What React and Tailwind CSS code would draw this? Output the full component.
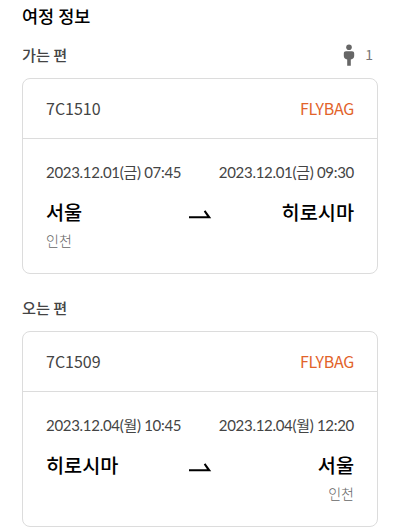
import React from "react";

const journeys = [
  {
    label: "가는 편",
    passengers: 1,
    flight: "7C1510",
    fare: "FLYBAG",
    from: { date: "2023.12.01(금) 07:45", city: "서울", airport: "인천" },
    to: { date: "2023.12.01(금) 09:30", city: "히로시마" },
  },
  {
    label: "오는 편",
    flight: "7C1509",
    fare: "FLYBAG",
    from: { date: "2023.12.04(월) 10:45", city: "히로시마" },
    to: { date: "2023.12.04(월) 12:20", city: "서울", airport: "인천" },
  },
];

function PersonIcon() {
  return (
    <svg width="12" height="22" viewBox="0 0 12 22" fill="#666666">
      <circle cx="6" cy="3.2" r="2.8" />
      <path d="M3 7.2H9C10.300 7.200 11.200 8.100 11.200 9.400V11.800C11.200 13.800 10 15.200 7.800 15.600V21.800H4.200V15.600C2 15.200 .8 13.800 .8 11.800V9.400C.8 8.100 1.700 7.200 3 7.200Z" />
    </svg>
  );
}

function ArrowIcon() {
  return (
    <svg width="23" height="9" viewBox="0 0 23 9" fill="#000">
      <path d="M0 6.200H18L14.800 1.500L16.400 .2L22.200 8.300H0Z" />
    </svg>
  );
}

function Stop({ stop, right }) {
  return (
    <div className={right ? "text-right" : "text-left"}>
      <p className="h-8 text-[19.7px] leading-8 font-medium text-black">{stop.city}</p>
      <p className="h-6 text-[14px] leading-6 font-light text-[#666]">{stop.airport}</p>
    </div>
  );
}

function JourneyCard({ journey }) {
  return (
    <div className="h-[196px] w-[356px] rounded-lg border border-[#dcdcdc]">
      <div className="flex h-[60px] items-center justify-between border-b border-[#dcdcdc] px-[23px] pb-[2px] text-[16px]">
        <span className="text-[#444]">{journey.flight}</span>
        <span className="tracking-[-0.3px] text-[#e2632a]">{journey.fare}</span>
      </div>
      <div className="px-[23px] pt-[21px]">
        <div className="flex justify-between font-['Lato','Noto_Sans_CJK_KR',sans-serif] text-[15px] leading-6 tracking-[-0.3px] whitespace-nowrap text-[#444]">
          <span>{journey.from.date}</span>
          <span>{journey.to.date}</span>
        </div>
        <div className="mt-3 grid grid-cols-[1fr_23px_1fr]">
          <Stop stop={journey.from} />
          <div className="pt-[14px]">
            <ArrowIcon />
          </div>
          <Stop stop={journey.to} right />
        </div>
      </div>
    </div>
  );
}

export default function App() {
  return (
    <main className="h-[531px] w-[400px] overflow-hidden bg-white pl-[22px] font-['Noto_Sans_CJK_KR',sans-serif]">
      <h1 className="h-8 text-[17.500px] leading-8 font-medium text-black">여정 정보</h1>
      <div className="flex flex-col gap-[17px] pt-[6px]">
        {journeys.map((journey) => (
          <section key={journey.label}>
            <div className="flex h-10 w-[351px] items-start justify-between">
              <h2 className="text-[15.2px] leading-[33px] font-medium text-[#444]">{journey.label}</h2>
              {journey.passengers && (
                <div className="flex h-[34px] items-center gap-[10px] text-[14px] text-[#777]">
                  <PersonIcon />
                  <span className="pb-[2px]">{journey.passengers}</span>
                </div>
              )}
            </div>
            <JourneyCard journey={journey} />
          </section>
        ))}
      </div>
    </main>
  );
}
